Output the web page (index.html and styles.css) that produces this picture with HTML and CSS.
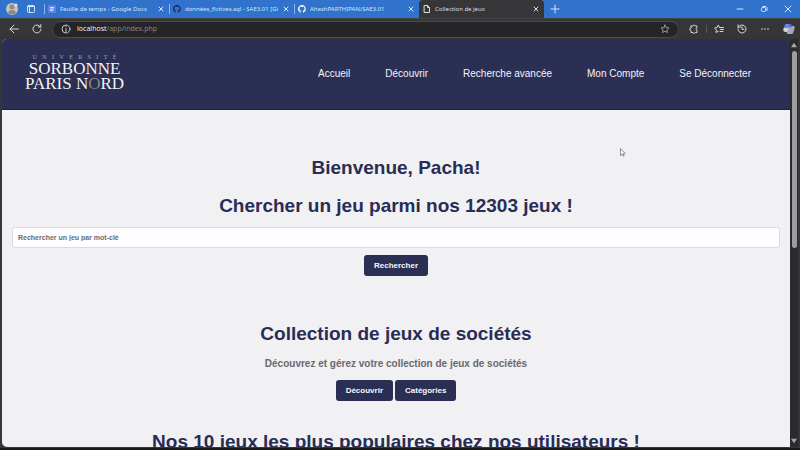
FILE: index.html
```html
<!DOCTYPE html>
<html lang="fr">
<head>
<meta charset="utf-8">
<title>Collection de jeux</title>
<link rel="stylesheet" href="styles.css">
</head>
<body>
<svg class="defs" aria-hidden="true">
  <symbol id="close" viewBox="0 0 8 8"><path d="M2 2l4 4M6 2L2 6"/></symbol>
  <symbol id="github" viewBox="0 0 16 16"><path d="M8 0C3.6 0 0 3.6 0 8c0 3.500 2.300 6.500 5.500 7.600.4.1.5-.2.5-.4v-1.500c-2 .4-2.600-.5-2.700-.9-.1-.3-.5-1-.9-1.200-.3-.1-.7-.6 0-.6.6 0 1.100.6 1.200.8.700 1.200 1.900.9 2.400.7.1-.5.300-.9.500-1.100-1.800-.2-3.600-.9-3.600-4 0-.9.300-1.600.8-2.100-.1-.2-.4-1 .1-2.100 0 0 .7-.2 2.200.8a7.500 7.500 0 0 1 4 0c1.500-1 2.200-.8 2.200-.8.4 1.100.2 1.900.1 2.100.5.600.8 1.300.8 2.100 0 3.100-1.900 3.700-3.700 3.900.3.300.6.800.6 1.500v2.200c0 .2.1.5.500.4A8 8 0 0 0 8 0z"/></symbol>
</svg>
<div class="browser">
  <header class="tabbar">
    <button class="icon-btn profile" aria-label="Profil"><svg viewBox="0 0 14 14"><circle cx="7" cy="7" r="6" fill="#c9c2bd"/><circle cx="7" cy="5" r="2.500" fill="#918985"/><path d="M3 11c0-4 8-4 8 0a6 6 0 0 1-8 0" fill="#918985"/><circle cx="11" cy="3" r="1.500" fill="#e5e5e5"/></svg></button>
    <button class="icon-btn workspace" aria-label="Onglets"><svg class="line" viewBox="0 0 10 10"><rect x="1.500" y="1.500" width="7" height="7" rx="1"/><path d="M1.500 2.500h7M3.500 3v5"/></svg></button>
    <div class="tab"><svg class="favicon" viewBox="0 0 8 8"><rect width="8" height="8" rx="1" fill="#5a83ee"/><path d="M2 2.500h4M2 4h4M2 5.500h3" stroke="#fff" stroke-width=".8"/></svg><span class="tab-title">Feuille de temps - Google Docs</span><button class="tab-close" aria-label="Fermer"><svg class="line"><use href="#close"/></svg></button></div>
    <div class="tab"><svg class="favicon dark"><use href="#github"/></svg><span class="tab-title">données_fictives.sql - SAE3.01 [Gi</span><button class="tab-close" aria-label="Fermer"><svg class="line"><use href="#close"/></svg></button></div>
    <div class="tab"><svg class="favicon light"><use href="#github"/></svg><span class="tab-title">AhashPARTHIPAN/SAE3.01</span><button class="tab-close" aria-label="Fermer"><svg class="line"><use href="#close"/></svg></button></div>
    <div class="tab active"><svg class="favicon line" viewBox="0 0 8 8"><path d="M1.500.5h3l2 2v5h-5zM4.500.5v2h2"/></svg><span class="tab-title">Collection de jeux</span><button class="tab-close" aria-label="Fermer"><svg class="line"><use href="#close"/></svg></button></div>
    <button class="icon-btn newtab" aria-label="Nouvel onglet"><svg class="line" viewBox="0 0 10 10"><path d="M5 1v8M1 5h8"/></svg></button>
    <div class="window-controls">
      <button class="icon-btn" aria-label="Réduire"><svg class="line" viewBox="0 0 10 10"><path d="M2 5h6"/></svg></button>
      <button class="icon-btn" aria-label="Restaurer"><svg class="line" viewBox="0 0 10 10"><rect x="2.500" y="3.500" width="4" height="4" rx="1"/><path d="M4 2.500h3l1 1v3"/></svg></button>
      <button class="icon-btn" aria-label="Fermer la fenêtre"><svg class="line" viewBox="0 0 10 10"><path d="M2 2l6 6M8 2l-6 6"/></svg></button>
    </div>
  </header>
  <div class="toolbar">
    <button class="icon-btn back" aria-label="Retour"><svg class="line" viewBox="0 0 10 10"><path d="M9.500 5H1M5 1L1 5l4 4"/></svg></button>
    <button class="icon-btn" aria-label="Actualiser"><svg class="line" viewBox="0 0 10 10"><path d="M8.500 3A4 4 0 1 0 9 5M8.800.5V3H6.300"/></svg></button>
    <div class="address">
      <svg class="line info" viewBox="0 0 10 10"><circle cx="5" cy="5" r="4"/><path d="M5 4.500v3M5 2.500v.2"/></svg>
      <span class="url"><b>localhost</b>/app/index.php</span>
      <button class="icon-btn star" aria-label="Ajouter aux favoris"><svg class="line" viewBox="0 0 10 10"><path d="M5 1l1.200 2.600 2.800.3-2.100 1.900.6 2.800L5 7.200 2.500 8.600l.6-2.800L1 3.900l2.800-.3z"/></svg></button>
    </div>
    <div class="tools">
      <button class="icon-btn" aria-label="Extensions"><svg class="line" viewBox="0 0 10 10"><path d="M2 2h2a1.200 1.200 0 0 1 2.300 0H8v1.800a1.300 1.300 0 0 0 0 2.500V8.500H6.300a1.200 1.200 0 0 1-2.300 0H2V6.500a1.300 1.300 0 0 1 0-2.600z"/></svg></button>
      <span class="divider"></span>
      <button class="icon-btn" aria-label="Favoris"><svg class="line" viewBox="0 0 10 10"><path d="M5.500 3.500L4.300 1 3 3.500.5 4l1.800 1.800L2 8.500l2.300-1.300M5.500 3.500h4M6.500 5.500h3M6 7.500h3"/></svg></button>
      <button class="icon-btn" aria-label="Historique"><svg class="line" viewBox="0 0 10 10"><path d="M1 5a4 4 0 1 0 1.500-3.100L1 3.200M1 .8v2.400h2.500M5 2.800V5.300h2"/></svg></button>
      <button class="icon-btn" aria-label="Plus"><svg viewBox="0 0 10 10" fill="#ddd"><circle cx="2" cy="5" r=".8"/><circle cx="5" cy="5" r=".8"/><circle cx="8" cy="5" r=".8"/></svg></button>
      <button class="icon-btn copilot" aria-label="Copilot"><svg viewBox="0 0 12 12"><path d="M3 1h4c2 0 1 3 0 5S6 9 4 9H2C0 9 0 7 1 4.500S2 1 3 1z" fill="#5b8de8"/><path d="M.6 5h5L5 8.500c-1 .7-4 .7-4.500-1z" fill="#d5d4dc"/><path d="M7 3h3c2 0 2 2 1 4.500S10 11 9 11H5c-2 0-1-2 0-4s.5-4 2-4z" fill="#a8a7b4"/><path d="M6 1.500c2-.5 3 .5 3.500 1.500L7 5z" fill="#4b62e0"/></svg></button>
    </div>
  </div>
  <div class="viewport">
    <div class="page">
      <header class="site-header">
        <a class="logo" href="#" aria-label="Université Sorbonne Paris Nord">
          <span class="logo-top"><span>U</span><span>N</span><span>I</span><span>V</span><span>E</span><span>R</span><span>S</span><span>I</span><span>T</span><span>É</span></span>
          <span class="logo-name">SORBONNE</span>
          <span class="logo-name">PARIS N<span class="gold">O</span>RD</span>
        </a>
        <nav class="nav">
          <a href="#">Accueil</a><a href="#">Découvrir</a><a href="#">Recherche avancée</a><a href="#">Mon Compte</a><a href="#">Se Déconnecter</a>
        </nav>
      </header>
      <main class="content">
        <section class="block">
          <h1>Bienvenue, Pacha!</h1>
          <h1>Chercher un jeu parmi nos 12303 jeux !</h1>
          <form class="search">
            <input type="text" aria-label="Rechercher un jeu" placeholder="Rechercher un jeu par mot-clé">
            <button class="btn" type="button">Rechercher</button>
          </form>
        </section>
        <section class="block">
          <h1>Collection de jeux de sociétés</h1>
          <p class="lead">Découvrez et gérez votre collection de jeux de sociétés</p>
          <div class="actions"><a class="btn" href="#">Découvrir</a><a class="btn" href="#">Catégories</a></div>
        </section>
        <section class="block">
          <h1>Nos 10 jeux les plus populaires chez nos utilisateurs !</h1>
        </section>
      </main>
    </div>
    <div class="scrollbar" aria-hidden="true"><svg viewBox="0 0 8 8"><path d="M4 1l4 6H0z"/></svg><span class="thumb"></span><svg viewBox="0 0 8 8"><path d="M4 7L0 1h8z"/></svg></div>
    <svg class="cursor" viewBox="0 0 6 9" aria-hidden="true"><path d="M.5.5v7l1.700-1.500 1 2.300 1-.5-1-2.200h2z"/></svg>
  </div>
</div>
</body>
</html>
```
FILE: styles.css
```css
* { box-sizing: border-box; }
body { margin: 0; font-family: "Liberation Sans", Arial, sans-serif; background: #18181a; }
button { border: 0; padding: 0; background: none; font-family: inherit; }
a { color: inherit; text-decoration: none; }
svg { display: block; }
.defs { display: none; }
.line { fill: none; stroke: currentColor; stroke-width: 1; stroke-linecap: round; stroke-linejoin: round; }
.browser { height: 100vh; display: flex; flex-direction: column; background: #363638; overflow: hidden; border-bottom: 2px solid #18181a; }
.icon-btn { flex: none; width: 10px; color: #d6d6d8; }
.icon-btn svg { width: 10px; height: 10px; }

.tabbar { flex: none; height: 18px; display: flex; align-items: center; background: #3072cc; font-family: "Noto Sans", sans-serif; color: #d5e5fb; }
.tabbar .icon-btn { color: #d5e5fb; }
.profile, .profile svg { width: 14px; height: 14px; }
.tabbar .profile { margin-left: 5px; }
.workspace { margin: 0 8px 0 7px; }
.tab { width: 125px; height: 18px; padding: 0 4px; display: flex; align-items: center; gap: 4px; position: relative; }
.tab::before { content: ""; position: absolute; left: 0; top: 4px; width: 1px; height: 10px; background: #8fb4e8; }
.favicon { flex: none; width: 8px; height: 8px; }
.dark { fill: #172b56; }
.light { fill: #fff; }
.tab-title { flex: 1; font-size: 6px; line-height: 8px; white-space: nowrap; overflow: hidden; }
.tab-close { width: 8px; color: inherit; }
.tab-close svg { width: 8px; height: 8px; }
.active { background: #363638; color: #dedee0; border-radius: 4px 4px 0 0; }
.active::before { display: none; }
.newtab { margin-left: 6px; }
.window-controls { margin-left: auto; padding-right: 7px; display: flex; gap: 14px; }

.toolbar { flex: none; height: 21px; padding: 0 5px 0 9px; display: flex; align-items: center; gap: 13px; border-top: 1px solid #454547; }
.address { flex: 1; height: 17px; margin-left: -3px; padding: 0 8px; display: flex; align-items: center; gap: 6px; border: 1px solid #4b4b4e; border-radius: 9px; background: #252427; font-family: "Noto Sans", sans-serif; }
.info { width: 10px; height: 10px; color: #c8c8ca; }
.url { flex: 1; font-size: 7px; line-height: 10px; color: #858588; }
.url b { font-weight: 400; color: #eee; }
.star { color: #939395; }
.tools { display: flex; align-items: center; gap: 13px; margin-left: -3px; }
.divider { width: 1px; height: 8px; margin: 0 -6px; background: #59595c; }
.copilot, .copilot svg { width: 12px; height: 12px; }

.viewport { position: relative; flex: 1; min-height: 0; margin: 0 2px 1px; display: flex; }
.page { flex: 1; min-width: 0; overflow: hidden; background: #f1f0f3; border-radius: 5px 0 0 5px; }
.site-header { min-height: 71px; padding: 0 39px 0 23px; display: flex; align-items: center; justify-content: space-between; background: #2a2f53; border-bottom: 1px solid #1d2148; color: #f4f4fa; }
.logo { display: flex; flex-direction: column; align-items: center; margin-top: -4px; font-family: "Liberation Serif", serif; color: #f4f4f8; }
.logo-top { width: 84px; display: flex; justify-content: space-between; font-size: 6px; line-height: 8px; color: #a5a1a0; }
.logo-name { font-size: 17px; line-height: 15px; white-space: nowrap; }
.gold { color: #8d8881; }
.nav { display: flex; gap: 35px; font-size: 10px; line-height: 14px; white-space: nowrap; }

.content { padding: 44px 10px 0; display: flex; flex-direction: column; gap: 27px; text-align: center; }
.block { display: flex; flex-direction: column; align-items: center; }
h1 { margin: 0 0 10px; font-size: 19px; line-height: 28px; color: #292d55; white-space: nowrap; }
.search { width: 100%; display: flex; flex-direction: column; align-items: center; gap: 7px; margin: -3px 0 17px; }
.search input { width: 100%; height: 21px; padding: 0 5px; border: 1px solid #dcdbe0; border-radius: 3px; background: #fefdff; font: bold 7px "Liberation Sans", Arial, sans-serif; }
.search input::placeholder { color: #6b6a6e; opacity: 1; }
.btn { height: 21px; padding: 0 10px; border-radius: 3px; background: #2a2f53; color: #f7f7fc; font-size: 8px; line-height: 21px; font-weight: 700; }
.lead { margin: 0 0 10px; font-size: 10px; line-height: 12px; font-weight: 700; color: #69686d; }
.actions { display: flex; gap: 2px; }

.scrollbar { flex: none; width: 8px; padding: 3px 1px; display: flex; flex-direction: column; gap: 3px; align-items: center; background: #2b2b2d; fill: #a7a7a9; }
.scrollbar svg { width: 6px; height: 6px; }
.thumb { width: 5px; height: 49%; border-radius: 3px; background: #9d9d9f; }
.scrollbar svg:last-child { margin-top: auto; }
.cursor { position: absolute; left: 618px; top: 109px; width: 6px; height: 9px; fill: #fff; stroke: #8d8d91; stroke-width: 1; }
```
